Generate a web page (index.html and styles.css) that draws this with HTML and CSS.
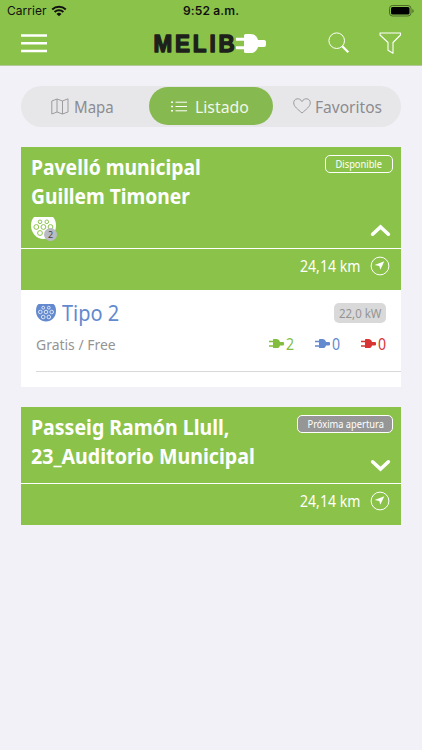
FILE: index.html
```html
<!DOCTYPE html>
<html lang="es">
<head>
<meta charset="utf-8">
<title>MELIB</title>
<link rel="stylesheet" href="styles.css">
</head>
<body>
<svg class="defs" width="0" height="0" aria-hidden="true">
  <symbol id="plug" viewBox="0 0 30 19"><path d="M0 5.200h9M0 13.800h9" stroke="currentColor" stroke-width="3" fill="none"/><path d="M8 1.500Q8 0 9.500 0H14.500c4 0 6.500 2.500 7.500 6H28a2 2 0 0 1 2 2v3a2 2 0 0 1-2 2h-6c-1 3.500-3.500 6-7.500 6H9.500Q8 19 8 17.500z" fill="currentColor"/></symbol>
  <symbol id="nav" viewBox="0 0 20 20"><circle cx="10" cy="10" r="8.900" fill="none" stroke="#fff" stroke-width="1"/><path d="M14.300 5.200 10.300 13.800 9.300 10 4.700 9z" fill="#fff"/></symbol>
</svg>
<header class="header">
  <div class="status">
    <span class="carrier">Carrier</span>
    <svg class="wifi" viewBox="0 0 16 12"><path d="M1.200 4.500a10 10 0 0 1 13.600 0M3.600 7a6.400 6.400 0 0 1 8.800 0" fill="none" stroke="#111" stroke-width="2"/><path d="M8 11.300 5.500 8.900a3.600 3.600 0 0 1 5 0z" fill="#111"/></svg>
    <span class="time">9:52 a.m.</span>
    <svg class="battery" viewBox="0 0 26 12"><rect x=".5" y=".5" width="21.500" height="10.500" rx="3" fill="none" stroke="#4c6b29"/><rect x="2" y="2" width="18.500" height="7.500" rx="1.500"/><path d="M23.300 4v4q1.400-.6 1.400-2t-1.400-2z" fill="#4c6b29"/></svg>
  </div>
  <div class="bar">
    <svg class="menu" viewBox="0 0 26 19"><path d="M0 1.500h26M0 9.300h26M0 17h26" stroke="#fff" stroke-width="2.400"/></svg>
    <div class="logo">
      <svg class="logo-word" viewBox="0 0 82 20"><text x="-.5" y="18.300" textLength="84" lengthAdjust="spacingAndGlyphs">MELIB</text></svg>
      <svg class="logo-plug"><use href="#plug"/></svg>
    </div>
    <svg class="search" viewBox="0 0 22 22"><circle cx="8.700" cy="8.700" r="7.800" fill="none" stroke="#fff" stroke-width="1"/><path d="m14.300 14.300 6 6" stroke="#fff" stroke-width="2.200"/></svg>
    <svg class="filter" viewBox="0 0 23 22"><path d="M1 1h20.500v2L14 10.500v10.700L9 18.300v-7.800L1 3z" fill="none" stroke="#fff" stroke-width="1.100" stroke-linejoin="round"/></svg>
  </div>
</header>
<main>
  <nav class="tabs">
    <div class="tab tab-map"><svg width="18" height="17" viewBox="0 0 18 17"><path d="M.8 3 6 1l5.500 2L17 .8V14l-5.500 2L6 14 .8 16zM6 1v13m5.500-11v13" fill="none" stroke="#939396" stroke-width=".9"/></svg><span class="txt t-mapa">Mapa</span></div>
    <div class="tab active"><svg width="16" height="11" viewBox="0 0 16 11"><path d="M4.500 1.200H16M4.500 5.500H16M4.500 9.800H16" stroke="#fff" stroke-width="1"/><path d="M0 1.200h2M0 5.500h2M0 9.800h2" stroke="#fff" stroke-width="1.600"/></svg><span class="txt t-listado">Listado</span></div>
    <div class="tab tab-fav"><svg width="18" height="16" viewBox="0 0 18 16"><path d="M9 15C5 11.500.7 8.500.7 4.800.7.200 6.800-.8 9 3.600 11.200-.8 17.300.2 17.300 4.800 17.300 8.500 13 11.500 9 15z" fill="none" stroke="#939396" stroke-width=".9"/></svg><span class="txt t-fav">Favoritos</span></div>
  </nav>

  <section class="card">
    <div class="card-head tall">
      <h2><span class="txt h1a">Pavelló municipal</span><br><span class="txt h1b">Guillem Timoner</span></h2>
      <div class="connector">
        <svg width="25" height="22" viewBox="0 0 25 22"><path d="M3 0h19q3 3 3 8.500C25 16 19.500 22 12.500 22S0 16 0 8.500Q0 3 3 0z" fill="#fff"/><g fill="none" stroke="#8bc34a" stroke-width="1"><circle cx="9" cy="4.800" r="1.800"/><circle cx="15.800" cy="4.800" r="1.800"/><circle cx="5.300" cy="10" r="2.400"/><circle cx="12.400" cy="10" r="2.400"/><circle cx="19.500" cy="10" r="2.400"/><circle cx="9" cy="16" r="2.400"/></g></svg>
        <span class="count">2</span>
      </div>
      <span class="badge free"><span class="txt b1">Disponible</span></span>
      <svg class="chevron up" viewBox="0 0 20 13"><path d="m2.500 10.500 7.500-7 7.500 7" fill="none" stroke="#fff" stroke-width="3.400" stroke-linecap="round"/></svg>
    </div>
    <div class="distance"><span class="txt km">24,14 km</span><svg width="20" height="20"><use href="#nav"/></svg></div>
    <div class="details">
      <div class="row type">
        <svg width="20" height="18" viewBox="0 0 20 18"><path d="M2.500 0h15Q20 2 20 7c0 6-4.500 10.500-10 10.500S0 13 0 7q0-5 2.500-7z" fill="#6389ce"/><g fill="none" stroke="#e8eefa" stroke-width=".9"><circle cx="7.200" cy="3.700" r="1.400"/><circle cx="12.800" cy="3.700" r="1.400"/><circle cx="4.300" cy="8" r="1.800"/><circle cx="10" cy="8" r="1.800"/><circle cx="15.700" cy="8" r="1.800"/><circle cx="7.200" cy="13" r="1.800"/><circle cx="12.800" cy="13" r="1.800"/></g></svg>
        <span class="txt tipo">Tipo 2</span><span class="power"><span class="txt kw">22,0 kW</span></span>
      </div>
      <div class="row price">
        <span class="txt gratis">Gratis / Free</span>
        <div class="plugs">
          <div class="plug green"><svg><use href="#plug"/></svg><span class="txt num">2</span></div>
          <div class="plug blue"><svg><use href="#plug"/></svg><span class="txt num">0</span></div>
          <div class="plug red"><svg><use href="#plug"/></svg><span class="txt num">0</span></div>
        </div>
      </div>
    </div>
  </section>

  <section class="card">
    <div class="card-head">
      <h2><span class="txt h2a">Passeig Ramón Llull,</span><br><span class="txt h2b">23_Auditorio Municipal</span></h2>
      <span class="badge soon"><span class="txt b2">Próxima apertura</span></span>
      <svg class="chevron" viewBox="0 0 20 13"><path d="m2.500 2.500 7.500 7 7.500-7" fill="none" stroke="#fff" stroke-width="3.400" stroke-linecap="round"/></svg>
    </div>
    <div class="distance"><span class="txt km">24,14 km</span><svg width="20" height="20"><use href="#nav"/></svg></div>
  </section>
</main>
</body>
</html>
```
FILE: styles.css
```css
* { box-sizing: border-box; }
body { margin: 0; height: 750px; background: #f1f1f7; font-family: "Noto Sans", "Open Sans", sans-serif; overflow: hidden; }
svg { display: block; flex: none; }
.defs { position: absolute; }
.header { height: 66px; background: #8bc34a; border-bottom: 1px solid #b5c79c; color: #111; }
.status { height: 22px; display: flex; align-items: center; padding: 0 7px; font: 12px/22px Inter, sans-serif; }
.carrier { width: 39px; letter-spacing: .05px; white-space: nowrap; }
.wifi { width: 16px; height: 12px; margin-left: 5px; margin-top: -1px; }
.time { width: 60px; margin-left: 116px; font-weight: 600; letter-spacing: .15px; white-space: nowrap; }
.battery { width: 26px; height: 12px; margin-left: 150px; margin-top: -1px; }
.bar { height: 43px; display: flex; align-items: center; padding-left: 21px; }
.menu { width: 26px; height: 19px; }
.logo { display: flex; align-items: center; margin-left: 107px; width: 114px; height: 20px; }
.logo-word { width: 82px; height: 20px; overflow: visible; }
.logo-word text { font: 700 24px "Liberation Sans", sans-serif; letter-spacing: 3px; fill: #1d211b; stroke: #1d211b; stroke-width: 1.4px; stroke-linejoin: round; }
.logo-plug { width: 30px; height: 19px; color: #fff; }
.search { width: 22px; height: 22px; margin-left: 60px; margin-top: -1px; }
.filter { width: 23px; height: 22px; margin-left: 29px; margin-top: -1px; }
main { padding: 20px 21px 0; }
.txt { display: inline-block; white-space: nowrap; transform: scaleX(.9); transform-origin: left; }
.tabs { display: flex; height: 41px; border-radius: 21px; background: #e7e7e9; color: #8c8c90; font-size: 17px; padding: 1px 0 2px; margin-bottom: 20px; }
.tab { display: flex; align-items: center; }
.tab-map { width: 128px; padding-left: 30px; }
.tab-map .txt { margin-left: 5px; transform: scaleX(.885); }
.active { width: 124px; padding-left: 22px; border-radius: 20px; background: #87b951; color: #f1f7e9; }
.active .txt { margin-left: 8px; transform: scaleX(.93); }
.tab-fav { width: 128px; padding-left: 20px; }
.tab-fav .txt { margin-left: 4px; transform: scaleX(.915); }
.card { margin-bottom: 20px; }
.card-head { position: relative; height: 76px; padding: 5px 10px; background: #8bc34a; color: #fff; }
.tall { height: 101px; }
h2 { margin: 0; font-size: 22px; line-height: 29px; font-weight: 700; }
.h1a { transform: scaleX(.878); }
.h1b { transform: scaleX(.873); }
.h2a { transform: scaleX(.887); }
.h2b { transform: scaleX(.892); }
.connector { position: relative; width: 25px; margin-top: 7px; }
.count { position: absolute; right: -1px; bottom: -2px; width: 13px; height: 13px; border-radius: 50%; background: #b9bbc4; color: #444; font-size: 9px; line-height: 13px; text-align: center; }
.badge { position: absolute; top: 8px; right: 8px; height: 18px; border: 1px solid #fff; border-radius: 5px; font-size: 10px; line-height: 16px; padding-left: 9px; }
.free { width: 68px; }
.soon { width: 96px; background: #969696; }
.badge .txt { transform: translateX(.5px) scaleX(.93); }
.chevron { position: absolute; right: 10px; bottom: 10px; width: 21px; height: 14px; }
.up { bottom: 11px; }
.distance { display: flex; align-items: center; height: 42px; padding: 0 11px 7px 279px; background: #8bc34a; border-top: 1px solid #fff; color: #fff; font-size: 16px; }
.distance .txt { width: 71px; transform: scaleX(.88); }
.details { height: 97px; background: #fff; padding-left: 15px; }
.row { display: flex; align-items: center; }
.type { height: 45px; color: #6389ce; font-size: 21px; }
.type .txt.tipo { margin-left: 6px; width: 272px; transform: scaleX(.95); }
.power { width: 52px; height: 20px; border-radius: 5px; background: #d9d9d9; color: #949494; font-size: 13px; line-height: 20px; padding-left: 5px; }
.kw { transform: scaleX(.88); }
.price { height: 37px; border-bottom: 1px solid #d9d9dc; color: #949494; font-size: 15px; padding-bottom: 19px; }
.gratis { width: 233px; transform: scaleX(.93); }
.plugs { display: flex; gap: 22px; }
.plug { display: flex; align-items: center; width: 24px; font-size: 16px; }
.plug svg { width: 15px; height: 9.500px; }
.plug .txt { margin-left: 2px; transform: scaleX(.88); }
.green { color: #82bd3f; }
.blue { color: #6389ce; }
.red { color: #d83434; }
```
